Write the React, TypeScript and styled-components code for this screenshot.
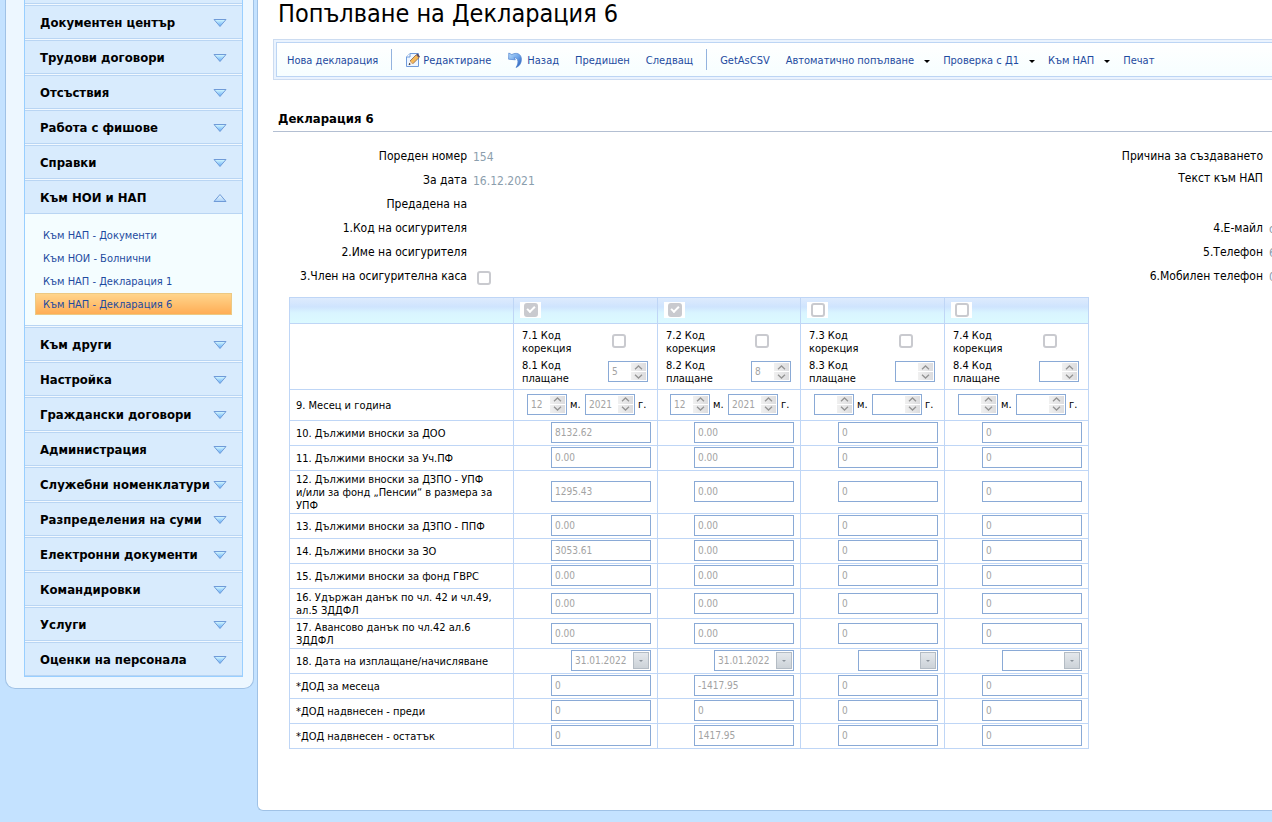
import React from "react";
import styled, { createGlobalStyle, css } from "styled-components";

const GlobalStyle = createGlobalStyle`
  *, *::before, *::after { box-sizing: border-box; }
  body {
    margin: 0;
    background: #c4e2ff;
    color: #000;
    font-family: Tahoma, "DejaVu Sans Condensed", "DejaVu Sans", sans-serif;
    font-size: 12px;
    overflow-x: hidden;
  }
  button, input { font-family: inherit; margin: 0; }
`;

const Page = styled.div`
  display: flex;
  align-items: flex-start;
  padding: 0 0 11px 5px;
`;

/* ---------- sidebar ---------- */

const Sidebar = styled.aside`
  flex: none;
  width: 249px;
  margin-right: 3px;
  padding: 0 10px 11px 18px;
  background: #edf7ff;
  border: 1px solid #a0c2e6;
  border-top: 0;
  border-radius: 0 0 10px 10px;
`;

const Nav = styled.nav`
  background: #f2f9ff;
  border: 1px solid #99cfff;
  border-top: 0;
  display: flex;
  flex-direction: column;
  gap: 1px;
`;

const NavEdge = styled.div`
  height: 4px;
  background: #d8ebfd;
  border-bottom: 1px solid #b9d5f3;
`;

const GroupHeader = styled.button`
  display: flex;
  align-items: center;
  justify-content: space-between;
  width: 100%;
  height: 34px;
  padding: 1px 15px 0;
  border: 0;
  border-top: 1px solid #b9d5f3;
  border-bottom: 1px solid #b9d5f3;
  background: #d8ebfd;
  color: #000;
  font-size: 13px;
  font-weight: bold;
  line-height: 17px;
  white-space: nowrap;
`;

const SubMenu = styled.ul`
  list-style: none;
  margin: 0;
  padding: 10px;
  display: flex;
  flex-direction: column;
  gap: 1px;
  background: #f4fdff;
  border-bottom: 1px solid #b9d5f3;
`;

const SubLink = styled.a<{ $active?: boolean }>`
  display: block;
  height: 22px;
  padding: 0 7px;
  border: 1px solid transparent;
  color: #1e4ba0;
  font-size: 11px;
  line-height: 22px;
  text-decoration: none;
  ${(p) =>
    p.$active &&
    css`
      border-color: #ecc983;
      background: linear-gradient(#ffd58c, #ffad55);
    `}
`;

const Group = styled.div``;

function Arrow({ up }: { up?: boolean }) {
  return (
    <svg width="14" height="10" viewBox="0 0 14 10" aria-hidden="true">
      <defs>
        <linearGradient id={up ? "au" : "ad"} x1="0" y1="0" x2="0" y2="1">
          <stop offset="0" stopColor={up ? "#eefaff" : "#d9fbff"} />
          <stop offset="1" stopColor={up ? "#a9d0f8" : "#5fa8f7"} />
        </linearGradient>
      </defs>
      <path
        d={up ? "M1 8.5 H13 L7 1.5 Z" : "M1 1.5 H13 L7 8.5 Z"}
        fill={up ? "url(#au)" : "url(#ad)"}
        stroke="#6f9bd8"
      />
    </svg>
  );
}

/* ---------- main panel ---------- */

const Main = styled.main`
  flex: 1;
  min-width: 0;
  padding: 0 0 61px 15px;
  background: #fff;
  border-left: 1px solid #a0c2e6;
  border-bottom: 1px solid #a0c2e6;
  border-radius: 0 0 0 6px;
  overflow: hidden;
`;

const Title = styled.h1`
  margin: 0;
  height: 39px;
  padding-left: 5px;
  font-size: 25px;
  font-weight: normal;
  line-height: 28px;
  white-space: nowrap;
`;

const ToolbarFrame = styled.div`
  padding: 2px 0 2px 2px;
  background: #eaf3fe;
  border: 1px solid #ccdcf1;
  border-right: 0;
`;

const Toolbar = styled.div`
  display: flex;
  align-items: center;
  height: 35px;
  padding-left: 2px;
  background: linear-gradient(#fff, #f6feff);
  border: 1px solid #bcd5f4;
  border-right: 0;
`;

const Tool = styled.button<{ $menu?: boolean }>`
  display: flex;
  align-items: center;
  gap: 2px;
  padding: 3px ${(p) => (p.$menu ? 5 : 8)}px 0 8px;
  border: 0;
  background: none;
  color: #1e4ba0;
  font-size: 11px;
  line-height: 16px;
  white-space: nowrap;
  svg { margin-top: -3px; }
`;

const Caret = styled.span`
  margin-left: 8px;
  border: 3px solid transparent;
  border-top-color: #000;
  border-bottom: 0;
`;

const Separator = styled.span`
  width: 1px;
  height: 21px;
  margin: 0 5px;
  background: #93b3de;
`;

function EditIcon() {
  return (
    <svg width="16" height="16" viewBox="0 0 16 16" aria-hidden="true">
      <path d="M5 1.5 H13.5 V14.5 H1.5 V5 Z" fill="#eef6ff" stroke="#6f9bdc" />
      <path d="M1.5 5 H5 V1.5" fill="#fff" stroke="#6f9bdc" />
      <path d="M5 9 L11.2 2.8 L14 5.6 L7.8 11.8 Z" fill="#f5b95a" stroke="#8a5f3c" strokeWidth=".8" />
      <path d="M11.2 2.8 L12.6 1.6 L15 4.4 L14 5.6 Z" fill="#5b4a63" />
      <path d="M5 9 L7.8 11.8 L3.8 12.8 Z" fill="#f4dfc6" />
      <path d="M4.3 11 L5.7 12.3 L3.6 13 Z" fill="#111" />
    </svg>
  );
}

function BackIcon() {
  return (
    <svg width="18" height="16" viewBox="0 0 18 16" aria-hidden="true">
      <defs>
        <linearGradient id="back" x1="0" y1="0" x2="1" y2="1">
          <stop offset="0" stopColor="#b9dcfa" />
          <stop offset=".5" stopColor="#6fa6ea" />
          <stop offset="1" stopColor="#1e4fae" />
        </linearGradient>
      </defs>
      <path
        d="M1.8 1 L4.8 2.6 C9 0 14.4 1.6 14.4 7.2 C14.4 11.4 12.2 14.4 9 15.5 C11 12.6 11.4 9.6 10.5 7.6 C9.7 6 8.4 5.6 7 5.8 L8.4 7.8 L1.6 7.2 Z"
        fill="url(#back)"
        stroke="#4c80cf"
        strokeWidth=".7"
      />
    </svg>
  );
}

const SectionTitle = styled.h2`
  margin: 30px 0 0;
  padding: 1px 0 4px 5px;
  border-bottom: 1px solid #b3bfd2;
  font-size: 13px;
  line-height: 16px;
`;

const Form = styled.div`
  display: flex;
  justify-content: space-between;
  padding-top: 12px;
`;

const Fields = styled.div<{ $labelWidth: number }>`
  display: grid;
  grid-template-columns: ${(p) => p.$labelWidth}px auto;
  grid-auto-rows: 24px;
  column-gap: 6px;
  line-height: 24px;
  white-space: nowrap;
`;

const RightFields = styled(Fields)`
  width: 153px;
  grid-template-rows: 22px 26px;
  overflow: hidden;
`;

const FieldLabel = styled.label`
  text-align: right;
`;

const FieldValue = styled.output`
  padding-top: 1px;
  color: #8b9ead;
`;

const Check = styled.input.attrs({ type: "checkbox" })`
  appearance: none;
  display: block;
  width: 14px;
  height: 14px;
  border: 2px solid #c9cacf;
  border-radius: 3px;
  background: #fff;
  &:checked { background: #c9cacf; }
  &:checked::after {
    content: "";
    display: block;
    width: 8px;
    height: 5px;
    margin: 1px;
    border-left: 2px solid #fff;
    border-bottom: 2px solid #fff;
    transform: rotate(-45deg);
  }
`;

const FormCheck = styled(Check)`
  margin: 7px 4px;
`;

/* ---------- declaration table ---------- */

const Grid = styled.table`
  width: 800px;
  margin: 9px 0 0 16px;
  table-layout: fixed;
  border-spacing: 0;
  border: 1px solid #bfd6f6;
  border-width: 1px 0 0 1px;
  font-size: 11px;
  line-height: 13px;
  th, td {
    padding: 0;
    border: 1px solid #bfd6f6;
    border-width: 0 1px 1px 0;
    font-weight: normal;
    text-align: left;
  }
  tbody th {
    padding-left: 6px;
    white-space: pre-line;
  }
`;

const HeadCell = styled.th`
  height: 26px;
  background: linear-gradient(#deebfd 0, #cfe4fe 35%, #d9f5ff 60%, #dcfaff 100%);
`;

const HeadCheck = styled.span`
  display: block;
  width: 21px;
  margin: 0 0 1px 6px;
  padding: 1px 4px;
  background: #fff;
`;

const Row = styled.tr<{ $h: number }>`
  height: ${(p) => p.$h}px;
`;

const Codes = styled.div`
  display: grid;
  grid-template-columns: 1fr 40px;
  grid-auto-rows: 26px;
  row-gap: 4px;
  align-items: center;
  padding: 1px 9px 0 8px;
`;

const CodeLabel = styled.label`
  width: 60px;
`;

const CodeCheck = styled(Check)`
  margin: 0 0 2px 4px;
`;

const SpinFrame = styled.span<{ $w: number }>`
  display: flex;
  width: ${(p) => p.$w}px;
  height: 21px;
  margin-bottom: 1px;
  padding: 1px;
  border: 1px solid #8aaad6;
  background: #fff;
`;

const inputText = css`
  color: #a3a3a3;
  font-size: 10px;
  line-height: 13px;
  background: #fff;
`;

const BareInput = styled.input`
  ${inputText}
  flex: 1;
  min-width: 0;
  padding: 0 0 0 2px;
  border: 0;
`;

const SpinButtons = styled.span`
  display: flex;
  flex-direction: column;
  gap: 1px;
  width: 15px;
`;

const SpinButton = styled.button`
  display: flex;
  flex: 1;
  align-items: center;
  justify-content: center;
  padding: 0;
  border: 0;
  background: linear-gradient(90deg, #f0f0f0, #dcdcde);
`;

function Spin({ id, value, w, label }: { id: string; value: string; w: number; label: string }) {
  return (
    <SpinFrame $w={w}>
      <BareInput id={id} disabled value={value} aria-label={label} readOnly />
      <SpinButtons>
        <SpinButton disabled aria-label={label + " +"}>
          <svg width="9" height="5" viewBox="0 0 9 5"><path d="M1 4.2 L4.5 1 L8 4.2" fill="none" stroke="#949494" strokeWidth="1.3" /></svg>
        </SpinButton>
        <SpinButton disabled aria-label={label + " -"}>
          <svg width="9" height="5" viewBox="0 0 9 5"><path d="M1 .8 L4.5 4 L8 .8" fill="none" stroke="#949494" strokeWidth="1.3" /></svg>
        </SpinButton>
      </SpinButtons>
    </SpinFrame>
  );
}

const Period = styled.div`
  display: flex;
  align-items: center;
  justify-content: flex-end;
  padding: 0 9px 1px 0;
`;

const Unit = styled.span<{ $w: number }>`
  width: ${(p) => p.$w}px;
  padding-left: 3px;
`;

const Amount = styled.input`
  ${inputText}
  display: block;
  width: 100px;
  height: 21px;
  margin: 0 6px 1px auto;
  padding: 0 3px;
  border: 1px solid #8aaad6;
`;

const DateFrame = styled(SpinFrame)`
  margin: 0 6px 1px auto;
`;

const DateButton = styled.button`
  display: flex;
  align-items: center;
  justify-content: center;
  width: 16px;
  padding: 0;
  border: 1px solid #b4bcc4;
  background: linear-gradient(#e4e8ec, #ccd2d8);
`;

const DateCaret = styled.span`
  border: 2px solid transparent;
  border-top-color: #8c949c;
  border-bottom: 0;
`;

const before = ["Документен център", "Трудови договори", "Отсъствия", "Работа с фишове", "Справки"];
const after = [
  "Към други", "Настройка", "Граждански договори", "Администрация", "Служебни номенклатури",
  "Разпределения на суми", "Електронни документи", "Командировки", "Услуги", "Оценки на персонала",
];
const links = ["Към НАП - Документи", "Към НОИ - Болнични", "Към НАП - Декларация 1", "Към НАП - Декларация 6"];

const cols = [
  { on: true, code: "5", month: "12", year: "2021", date: "31.01.2022" },
  { on: true, code: "8", month: "12", year: "2021", date: "31.01.2022" },
  { on: false, code: "", month: "", year: "", date: "" },
  { on: false, code: "", month: "", year: "", date: "" },
];

type AmountRow = { label: string; h: number; values: string[] };

const amounts: AmountRow[] = [
  { label: "10. Дължими вноски за ДОО", h: 25, values: ["8132.62", "0.00", "0", "0"] },
  { label: "11. Дължими вноски за Уч.ПФ", h: 25, values: ["0.00", "0.00", "0", "0"] },
  { label: "12. Дължими вноски за ДЗПО - УПФ\nи/или за фонд „Пенсии“ в размера за\nУПФ", h: 43, values: ["1295.43", "0.00", "0", "0"] },
  { label: "13. Дължими вноски за ДЗПО - ППФ", h: 25, values: ["0.00", "0.00", "0", "0"] },
  { label: "14. Дължими вноски за ЗО", h: 25, values: ["3053.61", "0.00", "0", "0"] },
  { label: "15. Дължими вноски за фонд ГВРС", h: 25, values: ["0.00", "0.00", "0", "0"] },
  { label: "16. Удържан данък по чл. 42 и чл.49,\nал.5 ЗДДФЛ", h: 30, values: ["0.00", "0.00", "0", "0"] },
  { label: "17. Авансово данък по чл.42 ал.6\nЗДДФЛ", h: 30, values: ["0.00", "0.00", "0", "0"] },
];

const taxes: AmountRow[] = [
  { label: "*ДОД за месеца", h: 25, values: ["0", "-1417.95", "0", "0"] },
  { label: "*ДОД надвнесен - преди", h: 25, values: ["0", "0", "0", "0"] },
  { label: "*ДОД надвнесен - остатък", h: 25, values: ["0", "1417.95", "0", "0"] },
];

function AmountRows({ rows }: { rows: AmountRow[] }) {
  return (
    <>
      {rows.map((r) => (
        <Row key={r.label} $h={r.h}>
          <th scope="row">{r.label}</th>
          {r.values.map((v, i) => (
            <td key={i}><Amount disabled readOnly value={v} aria-label={r.label} /></td>
          ))}
        </Row>
      ))}
    </>
  );
}

export default function App() {
  return (
    <>
      <GlobalStyle />
      <Page>
        <Sidebar>
          <Nav>
            <NavEdge />
            {before.map((t) => (
              <GroupHeader key={t}>{t}<Arrow /></GroupHeader>
            ))}
            <Group>
              <GroupHeader aria-expanded="true">Към НОИ и НАП<Arrow up /></GroupHeader>
              <SubMenu>
                {links.map((t, i) => (
                  <li key={t}><SubLink href="#" $active={i === 3}>{t}</SubLink></li>
                ))}
              </SubMenu>
            </Group>
            {after.map((t) => (
              <GroupHeader key={t}>{t}<Arrow /></GroupHeader>
            ))}
          </Nav>
        </Sidebar>
        <Main>
          <Title>Попълване на Декларация 6</Title>
          <ToolbarFrame>
            <Toolbar>
              <Tool>Нова декларация</Tool>
              <Separator />
              <Tool><EditIcon />Редактиране</Tool>
              <Tool><BackIcon />Назад</Tool>
              <Tool>Предишен</Tool>
              <Tool>Следващ</Tool>
              <Separator />
              <Tool>GetAsCSV</Tool>
              <Tool $menu>Автоматично попълване<Caret /></Tool>
              <Tool $menu>Проверка с Д1<Caret /></Tool>
              <Tool $menu>Към НАП<Caret /></Tool>
              <Tool>Печат</Tool>
            </Toolbar>
          </ToolbarFrame>
          <SectionTitle>Декларация 6</SectionTitle>
          <Form>
            <Fields $labelWidth={194}>
              <FieldLabel htmlFor="num">Пореден номер</FieldLabel><FieldValue id="num">154</FieldValue>
              <FieldLabel htmlFor="date">За дата</FieldLabel><FieldValue id="date">16.12.2021</FieldValue>
              <FieldLabel htmlFor="sent">Предадена на</FieldLabel><FieldValue id="sent" />
              <FieldLabel htmlFor="code">1.Код на осигурителя</FieldLabel><FieldValue id="code" />
              <FieldLabel htmlFor="name">2.Име на осигурителя</FieldLabel><FieldValue id="name" />
              <FieldLabel htmlFor="fund">3.Член на осигурителна каса</FieldLabel><FormCheck id="fund" disabled />
            </Fields>
            <RightFields $labelWidth={144}>
              <FieldLabel htmlFor="reason">Причина за създаването</FieldLabel><FieldValue id="reason" />
              <FieldLabel htmlFor="text">Текст към НАП</FieldLabel><FieldValue id="text" />
              <span /><span />
              <FieldLabel htmlFor="mail">4.Е-майл</FieldLabel><FieldValue id="mail">o</FieldValue>
              <FieldLabel htmlFor="phone">5.Телефон</FieldLabel><FieldValue id="phone">6</FieldValue>
              <FieldLabel htmlFor="mobile">6.Мобилен телефон</FieldLabel><FieldValue id="mobile">0</FieldValue>
            </RightFields>
          </Form>
          <Grid>
            <colgroup>
              <col width="224" /><col width="144" /><col width="143" /><col width="144" /><col width="144" />
            </colgroup>
            <thead>
              <tr>
                <HeadCell />
                {cols.map((c, i) => (
                  <HeadCell key={i}>
                    <HeadCheck><Check disabled readOnly checked={c.on} aria-label={"Колона " + (i + 1)} /></HeadCheck>
                  </HeadCell>
                ))}
              </tr>
            </thead>
            <tbody>
              <Row $h={66}>
                <td />
                {cols.map((c, i) => (
                  <td key={i}>
                    <Codes>
                      <CodeLabel htmlFor={"fix" + i}>{`7.${i + 1} Код корекция`}</CodeLabel>
                      <CodeCheck id={"fix" + i} disabled />
                      <CodeLabel htmlFor={"pay" + i}>{`8.${i + 1} Код плащане`}</CodeLabel>
                      <Spin id={"pay" + i} value={c.code} w={40} label="Код плащане" />
                    </Codes>
                  </td>
                ))}
              </Row>
              <Row $h={31}>
                <th scope="row">9. Месец и година</th>
                {cols.map((c, i) => (
                  <td key={i}>
                    <Period>
                      <Spin id={"month" + i} value={c.month} w={40} label="Месец" /><Unit $w={18}>м.</Unit>
                      <Spin id={"year" + i} value={c.year} w={50} label="Година" /><Unit $w={13}>г.</Unit>
                    </Period>
                  </td>
                ))}
              </Row>
              <AmountRows rows={amounts} />
              <Row $h={25}>
                <th scope="row">18. Дата на изплащане/начисляване</th>
                {cols.map((c, i) => (
                  <td key={i}>
                    <DateFrame $w={80}>
                      <BareInput disabled readOnly value={c.date} aria-label="Дата" />
                      <DateButton disabled aria-label="Избор на дата"><DateCaret /></DateButton>
                    </DateFrame>
                  </td>
                ))}
              </Row>
              <AmountRows rows={taxes} />
            </tbody>
          </Grid>
        </Main>
      </Page>
    </>
  );
}
